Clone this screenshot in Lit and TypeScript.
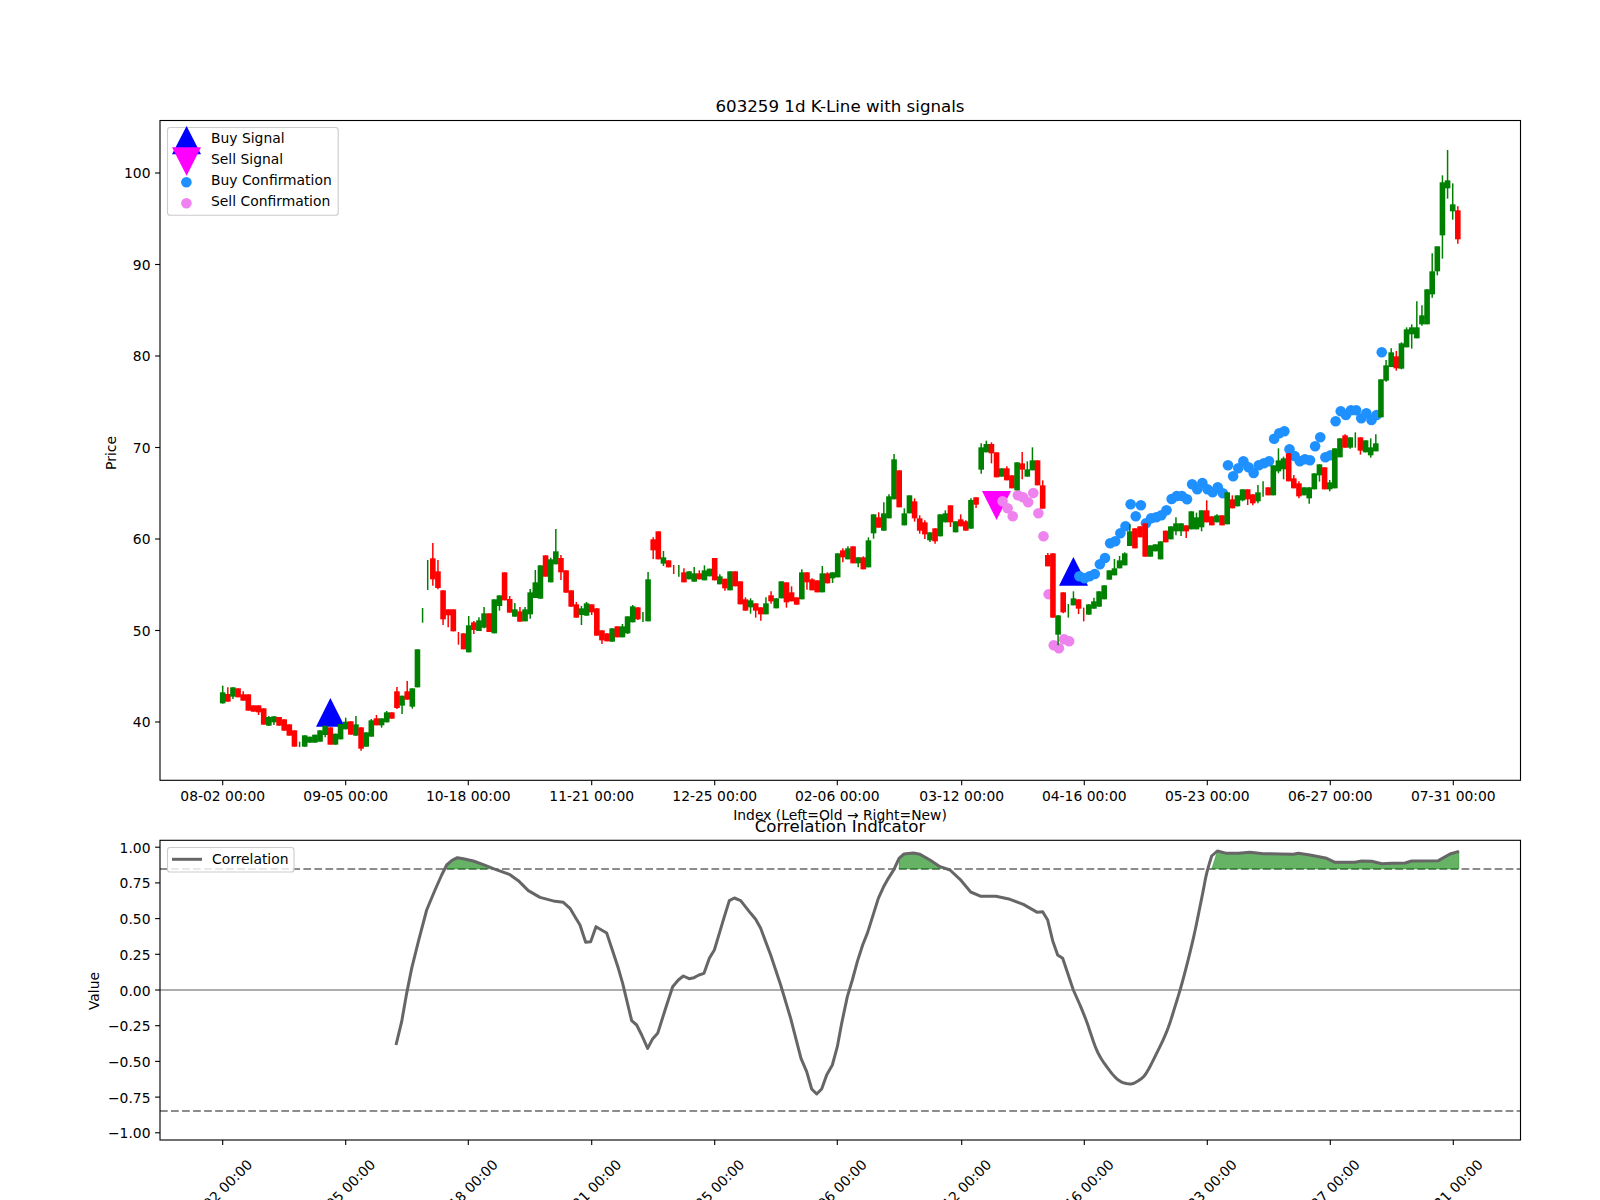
import { LitElement, html, svg, css } from "lit";
import { customElement } from "lit/decorators.js";

// x position of bar i
const bx = (i: number) => 222.7 + 5.125 * i;

// [colour, bodyTop, bodyBottom, wickTop, wickBottom] as 3x crop coordinates, one group per y origin
// colour: 0 green, 1 red; body null/0 = wick only
type C = [number, number, number, number?, number?];
const G1: C[] = [
  [0,517,550,497,551],[1,522,545,502,545],[0,502,530,502,537],[1,505,532],[1,523,542,514,542],[1,523,572],[1,556,575],[1,556,577,556,585],[1,565,614],[0,591,617,588,618],
  [0,589,607,589,615],[1,591,617],[1,598,632],[1,613,647],[1,631,680],[0,0,0,665,681],[0,646,680],[0,650,668],[0,644,668],[0,631,665],
  [0,617,645,617,652],[1,622,674],[0,641,674],[0,612,658],[0,605,628,593,628],[1,604,644],[0,613,647,588,647],[1,622,686,622,692],[0,637,680],[0,601,650,597,650],
  [1,595,616,585,616],[0,595,616,595,623],[0,577,607,573,607],[1,577,596],[1,514,564,501,567],[0,527,557,527,582],[1,514,539,483,539],[0,505,560,505,566],[0,388,502],[0,0,0,264,308],
  [0,0,0,120,210],[1,115,178,69,197],[1,154,204,120,208],[1,211,298,211,315],[1,268,286,268,322],[1,268,334],[1,0,0,336,374],[1,340,388],[0,316,397,288,397],[1,307,330,303,342],
  [0,301,333,292,333],[0,280,323,261,325],[1,280,336],[0,238,340],
];
const G2: C[] = [
  [0,226,258,226,272],[1,157,241],[1,237,278,228,278],[0,268,290,249,290],[1,274,305,261,305],[0,268,304,261,304],[0,217,283,207,296],[0,187,234,150,234],[0,136,236],[1,106,170],
  [0,118,187,113,187],[0,94,133,27,133],[1,114,157,105,180],[1,151,218],[1,211,260],[1,253,293,246,293],[0,265,285,258,315],[0,250,287,246,287],[1,253,277,253,285],[1,265,347],
  [1,331,361,331,372],[1,340,364],[0,325,365],[1,319,352],[0,319,352,312,352],[0,289,340,289,342],[0,259,307,255,307],[1,262,298,262,300],[0,0,0,276,306],[0,178,304,156,304],
  [1,58,91,52,117],[1,34,118],[0,112,131,93,138],[1,121,142],[1,0,0,135,162],[0,0,0,135,170],
];
const G3: C[] = [
  [1,397,427,385,427],[0,394,418],[0,400,425,381,425],[1,400,418,391,418],[0,391,421,376,421],[0,386,409],[1,354,421],[0,409,433,403,433],[1,416,445,416,452],[0,394,451],
  [1,394,439],[1,424,493],[1,478,512,472,512],[0,481,502,475,521],[1,490,512,490,533],[1,502,523,502,542],[0,490,523,472,523],[1,466,484,454,491],[0,475,505],[0,424,475],
  [1,427,487,427,503],[1,457,484,439,484],[1,472,494],[0,397,478,388,478],[1,397,427,397,449],[1,418,451,415,451],[1,421,457],[0,400,457,378,457],[1,400,430,397,430],[0,397,415,397,429],
  [0,340,412],[1,331,352,325,367],[0,325,358,319,358],[1,319,370],[0,352,370,352,382],[1,352,388,349,388],[0,301,382,292,382],[0,223,280,223,296],[1,232,263,217,263],[0,220,272,187,272],
  [0,169,235,163,235],[0,58,178,42,178],[1,91,202],[0,220,256,205,256],[0,166,220],[1,184,235,175,245],[1,235,272,226,281],[1,247,283,241,297],[0,277,301,277,306],[1,265,304,265,311],
  [0,223,289],[0,220,247,211,247],[1,196,247,196,261],[0,244,277],[1,238,259,223,259],[1,244,272,241,272],
];
const G4: C[] = [
  [0,240,326,235,326],[1,232,254,232,264],[0,82,149,70,161],[0,72,97,62,97],[1,72,100,67,130],[1,97,172],[0,145,170],[1,145,181,139,181],[1,166,205],[0,127,211],
  [1,130,149,96,178],[0,148,170,124,170],[0,121,151,82,151],[1,121,196],[1,196,266,181,266],[1,405,439,399,439],[1,400,593],[0,586,644,586,676],[1,517,577,517,580],[0,0,0,552,593],
  [0,535,556,514,556],[1,538,566,538,582],[1,0,0,563,604],[0,553,584],[0,544,566,533,566],[0,514,560],[0,496,538],[0,451,479],[0,445,466,417,466],[0,421,445,408,445],
  [0,400,436,397,436],[0,334,378,313,378],[1,325,385],[1,319,352],[1,310,410],[0,376,410],[0,373,394,373,394],[0,364,418],[1,332,367],[0,319,358],
  [0,310,334,292,346],
];
const G5: C[] = [
  [0,400,424,400,438],[1,406,424,406,444],[0,364,418],[0,382,418,368,418],[0,361,412,361,424],[1,361,397,331,397],[1,379,406],[0,376,397,373,397],[1,376,406],[0,307,403],
  [1,328,355,316,355],[0,316,349],[0,298,331,298,334],[1,298,328,298,345],[1,313,340,313,346],[0,307,334,285,340],[0,0,0,274,320],[1,292,316],[0,226,316],[0,211,244,175,250],
  [0,205,238,200,268],[1,190,274],[1,265,295,255,295],[1,280,319,274,325],[0,292,316],[0,292,325,292,341],[0,250,298],[0,223,256,223,275],[1,232,298],[0,277,298,270,304],
  [0,175,295],[0,145,202],
];
const G6: C[] = [
  [1,916,953,913,953],[0,922,953,922,956],[0,0,0,907,953],[1,922,962,922,974],[0,931,967],[0,952,976,925,983],[0,940,964,913,964],[0,748,862],[0,706,752,690,755],[0,667,711,655,711],
  [1,679,715,663,722],[0,640,716,637,718],[0,598,652,592,652],[0,592,613,583,656],[0,592,625,514,625],[0,556,583,526,587],[0,478,583],[0,424,493,370,503],[0,349,424,349,436],[0,157,316,136,386],
  [0,151,175,60,206],[0,223,244,160,269],[1,241,328,229,341],
];
const groups: [number, C[]][] = [[520, G1], [520, G2], [440, G3], [420, G4], [390, G5], [130, G6]];
const candles: { x: number; t: number; b: number; wt: number; wb: number; red: boolean; thin: boolean }[] = [];
for (const [oy, list] of groups) {
  for (const c of list) {
    const y = (v: number) => oy + v / 3;
    const thin = !c[1] && !c[2];
    candles.push({
      x: bx(candles.length),
      t: y(c[1]),
      b: y(c[2]),
      wt: c[3] !== undefined ? y(c[3]) : y(c[1]),
      wb: c[4] !== undefined ? y(c[4]) : y(c[2]),
      red: c[0] === 1,
      thin,
    });
  }
}

const dotX = (i: number) => bx(i) + 0.8;
const blueY = [576.3,578.3,576.3,574,564.3,558,543.3,541.3,533.3,526.3,504.3,516.3,505.3,523.3,518.3,517.3,515.3,510.3,499,496,496,499.3,
  484.3,489.3,483,489.3,492.3,487.3,493.3,465.3,476.3,468.3,461.3,467.3,473,465.3,463.3,461.3,438.7,433.3,431.3,449.3,456,461.3,459.3,460.3,446.3,437.3,457.3,455.3,421.3,411.3,415,410.3,410.3,418.3,413.3,420,415,352.3];
const violetY = [501.3,508.3,516.3,495.3,497.3,502.3,493,513.3,536.3,594.3,645.3,648.3,639.3,641.3];

const conv = (ox: number, oy: number, a: number[][]) => a.map(([x, y]) => [ox + x / 3, oy + y / 3]);
// Catmull-Rom densify for the smooth stretches of the curve
const smooth = (p: number[][]) => {
  const out: number[][] = [];
  for (let i = 0; i < p.length - 1; i++) {
    const a = p[Math.max(0, i - 1)], b = p[i], c = p[i + 1], d = p[Math.min(p.length - 1, i + 2)];
    for (let k = 0; k < 6; k++) {
      const t = k / 6, t2 = t * t, t3 = t2 * t;
      const f = (q: number) => {
        const [p0, p1, p2, p3] = [a[q], b[q], c[q], d[q]];
        return 0.5 * (2 * p1 + (p2 - p0) * t + (2 * p0 - 5 * p1 + 4 * p2 - p3) * t2 + (3 * p1 - p0 - 3 * p2 + p3) * t3);
      };
      out.push([f(0), f(1)]);
    }
  }
  return out;
};
const corr: number[][] = [
  ...conv(80, 770, [[948,825],[965,755],[980,670],[995,595],[1015,515],[1040,420],[1065,360],[1085,315],[1100,285],[1115,272],[1132,263],[1150,266],[1180,273],[1210,284],[1240,296],[1290,314],[1315,332],[1345,362],[1380,382],[1425,394],[1450,397],[1470,415],[1485,440]]),
  ...conv(580, 770, [[0,465],[17,517],[32,515],[48,470],[80,489],[97,540],[115,595],[128,640],[155,752],[170,765],[185,795],[203,835],[217,808],[233,790],[260,705],[278,650],[295,630],[310,618],[327,626],[342,623],[357,615],[372,610],[388,565],[403,540],[418,490],[433,440],[448,392],[463,384],[482,392],[512,430],[527,448],[542,475],[572,555],[602,645],[632,745],[663,865],[680,905],[695,957],[710,972],[725,957],[740,915],[757,885],[772,830],[785,760],[802,680],[817,630],[832,575],[848,525],[863,487],[895,385],[910,352],[925,325],[942,298],[957,265],[972,252],[1000,249],[1020,253],[1050,270],[1080,290],[1110,300],[1140,328],[1172,366],[1203,379],[1248,379],[1290,388],[1330,403],[1372,427],[1388,425],[1403,450],[1418,512],[1433,555],[1448,565],[1480,660]]),
  ...smooth(conv(1080, 770, [[0,705],[20,755],[50,840],[80,890],[115,930],[150,942],[175,932],[197,912],[225,860],[260,785],[285,710],[310,625],[340,505],[365,385],[380,310],[395,258]])),
  ...conv(1080, 770, [[395,258],[412,243],[440,250],[475,250],[510,247],[550,251],[600,252],[640,253],[655,250],[690,255],[740,265],[765,277],[825,277],[845,273],[875,274],[905,281],[935,280],[975,279],[995,273],[1075,272],[1110,252],[1137,244]]),
];

const Y85 = 869;
const fillBetween = (x0: number, x1: number) => {
  const pts = corr.filter(([x]) => x >= x0 && x <= x1);
  const all = [[x0, Y85], ...pts, [x1, Y85]];
  return all.map((p) => p.join(",")).join(" ");
};
const pointsStr = corr.map((p) => p.join(",")).join(" ");

const xTicks: [number, string][] = [
  [222.7, "08-02 00:00"],[345.7, "09-05 00:00"],[468.3, "10-18 00:00"],[591.7, "11-21 00:00"],[714.7, "12-25 00:00"],[837.3, "02-06 00:00"],
  [961.7, "03-12 00:00"],[1084.3, "04-16 00:00"],[1207.3, "05-23 00:00"],[1330.3, "06-27 00:00"],[1453.3, "07-31 00:00"],
];
const yMain = [100, 90, 80, 70, 60, 50, 40].map((v) => [173 + (100 - v) * 9.15, v] as [number, number]);
const yLow = [1, 0.75, 0.5, 0.25, 0, -0.25, -0.5, -0.75, -1].map((v) => [990.5 - v * 142.8, v] as [number, number]);
const fmt = (v: number) => (v < 0 ? "\u2212" : "") + Math.abs(v).toFixed(2);

const L = 160, R = 1520.5;

@customElement("app-root")
export class AppRoot extends LitElement {
  static styles = css`
    :host { display: block; width: 1600px; height: 1200px; background: #fff; overflow: hidden; }
    svg { display: block; }
    text { font-family: "DejaVu Sans", sans-serif; font-size: 13.89px; fill: #000; }
    .title { font-size: 16.67px; text-anchor: middle; }
    .mid { text-anchor: middle; }
    .end { text-anchor: end; }
    .spine { fill: none; stroke: #000; stroke-width: 1.11; }
    .tick { stroke: #000; stroke-width: 1.11; }
    .legend { fill: rgba(255, 255, 255, 0.8); stroke: #ccc; stroke-width: 1.11; }
    .red { fill: #ff0000; }
    .green { fill: #008000; }
    .wred { stroke: #ff0000; stroke-width: 1.5; }
    .wgreen { stroke: #008000; stroke-width: 1.5; }
    .buy { fill: #0000ff; }
    .sell { fill: #ff00ff; }
    .bdot { fill: #1e90ff; }
    .vdot { fill: #ee82ee; }
    .zero { stroke: #adadad; stroke-width: 2; }
    .dash { stroke: #8c8c8c; stroke-width: 2.08; stroke-dasharray: 7.7 3.33; fill: none; }
    .fill { fill: #008000; fill-opacity: 0.6; stroke: #008000; stroke-opacity: 0.3; stroke-width: 1; }
    .corr { fill: none; stroke: #666; stroke-width: 3; stroke-linejoin: round; }
  `;

  render() {
    return html`<svg width="1600" height="1200" viewBox="0 0 1600 1200">
      ${this.mainAxes()}
      ${this.lowerAxes()}
    </svg>`;
  }

  mainAxes() {
    const bt = 780.3;
    return svg`
      <polygon class="buy" points="316,726.7 330.4,698 344.8,726.7" />
      <polygon class="sell" points="982,491 996.6,520 1011,491" />
      <polygon class="buy" points="1059,585.7 1073.4,557 1088,585.7" />
      ${violetY.map((y, k) => svg`<circle class="vdot" cx=${dotX(152 + k)} cy=${y} r="5.3" />`)}
      ${blueY.slice(0, -1).map((y, k) => svg`<circle class="bdot" cx=${dotX(167 + k)} cy=${y} r="5.3" />`)}
      <circle class="bdot" cx=${dotX(226)} cy="352.3" r="5.3" />
      ${candles.map((c) => svg`
        <line class=${c.red ? "wred" : "wgreen"} x1=${c.x} x2=${c.x} y1=${c.wt} y2=${c.wb} />
        ${c.thin ? "" : svg`<rect class=${c.red ? "red" : "green"} x=${c.x - 2.8} y=${c.t} width="5.6" height=${c.b - c.t} />`}
      `)}
      <rect class="spine" x=${L} y="120.5" width=${R - L} height=${bt - 120.5} />
      ${xTicks.map(([x, t]) => svg`
        <line class="tick" x1=${x} x2=${x} y1=${bt} y2=${bt + 4.9} />
        <text class="mid" x=${x} y="801">${t}</text>`)}
      ${yMain.map(([y, v]) => svg`
        <line class="tick" x1=${L - 4.9} x2=${L} y1=${y} y2=${y} />
        <text class="end" x="150.5" y=${y + 5}>${v}</text>`)}
      <text class="title" x="840" y="111.7">603259 1d K-Line with signals</text>
      <text class="mid" x="840" y="820">Index (Left=Old → Right=New)</text>
      <text class="mid" transform="translate(116 453) rotate(-90)">Price</text>
      <rect class="legend" x="167.5" y="127.5" width="170.7" height="87.7" rx="2.8" />
      <polygon class="buy" points="172,154.3 186.6,126 201,154.3" />
      <polygon class="sell" points="172,147.3 186.6,175.7 201,147.3" />
      <circle class="bdot" cx="186.4" cy="182.3" r="5.3" />
      <circle class="vdot" cx="186.4" cy="203.3" r="5.3" />
      <text x="211" y="143.3">Buy Signal</text>
      <text x="211" y="164.3">Sell Signal</text>
      <text x="211" y="185.4">Buy Confirmation</text>
      <text x="211" y="206">Sell Confirmation</text>
    `;
  }

  lowerAxes() {
    const top = 840.3, bt = 1140;
    return svg`
      <line class="zero" x1=${L} x2=${R} y1="990" y2="990" />
      <line class="dash" x1=${L} x2=${R} y1=${Y85} y2=${Y85} />
      <line class="dash" x1=${L} x2=${R} y1="1111" y2="1111" />
      <polygon class="fill" points=${fillBetween(446.5, 489.5)} />
      <polygon class="fill" points=${fillBetween(899, 940.7)} />
      <polygon class="fill" points=${fillBetween(1211.7, 1459)} />
      <polyline class="corr" points=${pointsStr} />
      <rect class="spine" x=${L} y=${top} width=${R - L} height=${bt - top} />
      ${xTicks.map(([x, t]) => svg`
        <line class="tick" x1=${x} x2=${x} y1=${bt} y2=${bt + 4.9} />
        <text class="mid" transform="translate(${x + 0.5} 1195.5) rotate(-45)">${t}</text>`)}
      ${yLow.map(([y, v]) => svg`
        <line class="tick" x1=${L - 4.9} x2=${L} y1=${y - 0.5} y2=${y - 0.5} />
        <text class="end" x="150.5" y=${y + 5}>${fmt(v)}</text>`)}
      <text class="title" x="840" y="832">Correlation Indicator</text>
      <text class="mid" transform="translate(98.5 991) rotate(-90)">Value</text>
      <rect class="legend" x="167.5" y="847.5" width="126.5" height="24.5" rx="2.8" />
      <line x1="172" x2="202" y1="859.3" y2="859.3" class="corr" />
      <text x="212" y="864.3">Correlation</text>
    `;
  }
}
